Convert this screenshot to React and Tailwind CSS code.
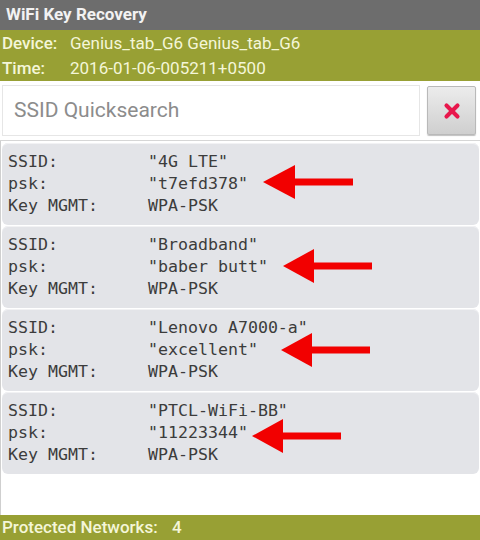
import { X } from 'lucide-react';

const networks = [
  { ssid: '"4G LTE"', psk: '"t7efd378"', mgmt: 'WPA-PSK' },
  { ssid: '"Broadband"', psk: '"baber butt"', mgmt: 'WPA-PSK' },
  { ssid: '"Lenovo A7000-a"', psk: '"excellent"', mgmt: 'WPA-PSK' },
  { ssid: '"PTCL-WiFi-BB"', psk: '"11223344"', mgmt: 'WPA-PSK' },
];

// annotation arrows drawn over the list: tip x, tip y, head back x, shaft end x
const arrows = [
  { tip: 263, y: 182, back: 295, end: 353 },
  { tip: 283, y: 266, back: 314, end: 372 },
  { tip: 281, y: 350, back: 312, end: 370 },
  { tip: 252, y: 436, back: 283, end: 341 },
];

const Row = ({ label, value }) => (
  <div className="flex h-[22px] items-center">
    <span className="w-[140px] shrink-0">{label}</span>
    <span>{value}</span>
  </div>
);

const App = () => {
  return (
    <div className="relative flex h-[540px] w-[480px] flex-col overflow-hidden bg-white font-['Roboto','Noto_Sans',sans-serif]">
      <header className="flex h-[30px] shrink-0 items-center bg-[#6d6d6d] pl-[6px] text-[17px] font-bold text-[#f2f2f2]">
        WiFi Key Recovery
      </header>

      <div className="flex h-[51px] shrink-0 flex-col justify-center bg-[#98a034] pl-[2px] text-[17px] leading-[25px] text-[#f4f6d8]">
        <div className="flex">
          <span className="w-[68px] font-medium">Device:</span>
          <span>Genius_tab_G6 Genius_tab_G6</span>
        </div>
        <div className="flex">
          <span className="w-[68px] font-medium">Time:</span>
          <span>2016-01-06-005211+0500</span>
        </div>
      </div>

      <div className="flex h-[60px] shrink-0 items-center gap-[7px] border-b border-[#d6d6d6] px-[2px]">
        <div className="flex h-[51px] flex-1 items-center border border-[#e6e6e6] bg-white pl-[11px] text-[21px] text-[#8c8c8c]">
          SSID Quicksearch
        </div>
        <button className="mr-[2px] flex h-[49px] w-[49px] items-center justify-center rounded-[2px] border border-[#b9b9b9] bg-gradient-to-b from-[#ececec] to-[#cfcfcf] shadow-[0_1px_1px_rgba(0,0,0,0.25)]">
          <X className="h-[22px] w-[22px] text-[#e8174c]" strokeWidth={4.5} />
        </button>
      </div>

      <div className="flex flex-1 flex-col gap-px border-l border-[#cfcfcf] pt-[2px] font-['DejaVu_Sans_Mono',monospace] text-[16.6px] text-[#3c3c3c]">
        {networks.map((n) => (
          <div
            key={n.ssid}
            className="mx-px flex h-[82px] flex-col justify-center rounded-[6px] bg-[#e3e4e8] pl-[6px] shadow-[inset_0_1px_0_#f2f2f4]"
          >
            <Row label="SSID:" value={n.ssid} />
            <Row label="psk:" value={n.psk} />
            <Row label="Key MGMT:" value={n.mgmt} />
          </div>
        ))}
      </div>

      <footer className="flex h-[25px] shrink-0 items-center bg-[#98a034] pl-[2px] text-[17px] font-medium text-[#f4f6d8]">
        <span className="w-[170px]">Protected Networks:</span>
        <span>4</span>
      </footer>

      <svg className="pointer-events-none absolute left-0 top-0" width="480" height="540">
        {arrows.map((a) => (
          <g key={a.y} fill="#f20000">
            <polygon points={`${a.tip},${a.y} ${a.back},${a.y - 17} ${a.back},${a.y + 17}`} />
            <rect x={a.back - 1} y={a.y - 3.5} width={a.end - a.back + 1} height={7} />
          </g>
        ))}
      </svg>
    </div>
  );
};

export default App;
